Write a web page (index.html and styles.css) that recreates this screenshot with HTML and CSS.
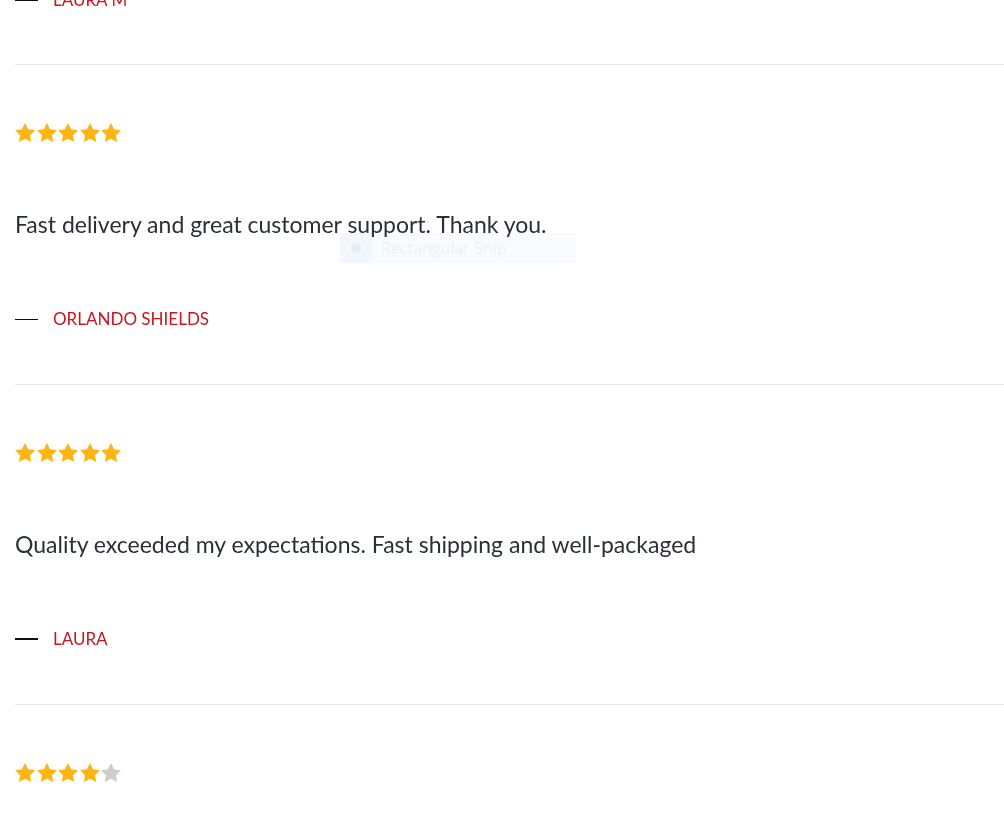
FILE: index.html
```html
<!DOCTYPE html>
<html lang="en">
<head>
<meta charset="utf-8">
<title>Reviews</title>
<link rel="stylesheet" href="styles.css">
</head>
<body>
<main class="reviews">
  <div class="review review--cut">
    <div class="author"><span class="dash dash--thick"></span><span class="name">Laura M</span></div>
  </div>

  <article class="review">
    <div class="stars">
      <svg class="star on" viewBox="2 2 20 19.02"><path d="M12 2l3.09 6.26L22 9.27l-5 4.87 1.18 6.88L12 17.770l-6.18 3.25L7 14.14 2 9.27l6.91-1.01L12 2z"/></svg>
      <svg class="star on" viewBox="2 2 20 19.02"><path d="M12 2l3.09 6.26L22 9.27l-5 4.87 1.18 6.88L12 17.77l-6.18 3.25L7 14.14 2 9.27l6.91-1.01L12 2z"/></svg>
      <svg class="star on" viewBox="2 2 20 19.02"><path d="M12 2l3.09 6.26L22 9.27l-5 4.87 1.18 6.88L12 17.77l-6.18 3.25L7 14.14 2 9.27l6.91-1.01L12 2z"/></svg>
      <svg class="star on" viewBox="2 2 20 19.02"><path d="M12 2l3.09 6.26L22 9.27l-5 4.87 1.18 6.88L12 17.77l-6.18 3.25L7 14.14 2 9.27l6.91-1.01L12 2z"/></svg>
      <svg class="star on" viewBox="2 2 20 19.02"><path d="M12 2l3.09 6.26L22 9.27l-5 4.87 1.18 6.88L12 17.77l-6.18 3.25L7 14.14 2 9.27l6.91-1.01L12 2z"/></svg>
    </div>
    <p class="text">Fast delivery and great customer support. Thank you.</p>
    <div class="author"><span class="dash"></span><span class="name">Orlando Shields</span></div>
  </article>

  <article class="review">
    <div class="stars">
      <svg class="star on" viewBox="2 2 20 19.02"><path d="M12 2l3.09 6.26L22 9.27l-5 4.87 1.18 6.88L12 17.77l-6.18 3.25L7 14.14 2 9.27l6.91-1.01L12 2z"/></svg>
      <svg class="star on" viewBox="2 2 20 19.02"><path d="M12 2l3.09 6.26L22 9.27l-5 4.87 1.18 6.88L12 17.77l-6.18 3.25L7 14.14 2 9.27l6.91-1.01L12 2z"/></svg>
      <svg class="star on" viewBox="2 2 20 19.02"><path d="M12 2l3.09 6.26L22 9.27l-5 4.87 1.18 6.88L12 17.77l-6.18 3.25L7 14.14 2 9.27l6.91-1.01L12 2z"/></svg>
      <svg class="star on" viewBox="2 2 20 19.02"><path d="M12 2l3.09 6.26L22 9.27l-5 4.87 1.18 6.88L12 17.77l-6.18 3.25L7 14.14 2 9.27l6.91-1.01L12 2z"/></svg>
      <svg class="star on" viewBox="2 2 20 19.02"><path d="M12 2l3.09 6.26L22 9.27l-5 4.87 1.18 6.88L12 17.77l-6.18 3.25L7 14.14 2 9.27l6.91-1.01L12 2z"/></svg>
    </div>
    <p class="text">Quality exceeded my expectations. Fast shipping and well-packaged</p>
    <div class="author"><span class="dash dash--thick"></span><span class="name">Laura</span></div>
  </article>

  <article class="review review--last">
    <div class="stars">
      <svg class="star on" viewBox="2 2 20 19.02"><path d="M12 2l3.09 6.26L22 9.27l-5 4.87 1.18 6.88L12 17.77l-6.18 3.25L7 14.14 2 9.27l6.91-1.01L12 2z"/></svg>
      <svg class="star on" viewBox="2 2 20 19.02"><path d="M12 2l3.09 6.26L22 9.27l-5 4.87 1.18 6.88L12 17.77l-6.18 3.25L7 14.14 2 9.27l6.91-1.01L12 2z"/></svg>
      <svg class="star on" viewBox="2 2 20 19.02"><path d="M12 2l3.09 6.26L22 9.27l-5 4.87 1.18 6.88L12 17.77l-6.18 3.25L7 14.14 2 9.27l6.91-1.01L12 2z"/></svg>
      <svg class="star on" viewBox="2 2 20 19.02"><path d="M12 2l3.09 6.26L22 9.27l-5 4.87 1.18 6.88L12 17.77l-6.18 3.25L7 14.14 2 9.27l6.91-1.01L12 2z"/></svg>
      <svg class="star off" viewBox="2 2 20 19.02"><path d="M12 2l3.09 6.26L22 9.27l-5 4.87 1.18 6.88L12 17.77l-6.18 3.25L7 14.14 2 9.27l6.91-1.01L12 2z"/></svg>
    </div>
  </article>
</main>

<div class="snip">
  <span class="snip-icon"><span class="snip-dot"></span></span>
  <span class="snip-label">Rectangular Snip</span>
</div>
</body>
</html>
```

FILE: styles.css
```css
html, body {
  margin: 0;
  padding: 0;
  background: #ffffff;
  overflow: hidden;
  height: 832px;
}

body {
  font-family: Lato, "Noto Sans", sans-serif;
  color: #2b3038;
}

.reviews {
  margin-left: 15px;
  display: flex;
  flex-direction: column;
}

.review {
  display: flex;
  flex-direction: column;
  border-top: 1px solid #ebebeb;
  padding: 57px 0 53px;
}

.review--cut {
  border-top: none;
  padding-top: 0;
  padding-bottom: 52px;
  margin-top: -12px;
}

.review--last {
  padding-bottom: 0;
}

.stars {
  display: flex;
  gap: 1.5px;
  height: 20px;
  align-items: center;
}

.star {
  width: 20px;
  height: 19px;
  display: block;
}

.star.on { fill: #fdb515; }
.star.off { fill: #cdcdcd; }

.text {
  margin: 66px 0 0;
  font-size: 23px;
  line-height: 32px;
  color: #2b3038;
}

.author {
  margin-top: 67px;
  display: flex;
  align-items: center;
  height: 24px;
}

.review--cut .author {
  margin-top: 0;
}

.dash {
  width: 23px;
  height: 1px;
  background: #111111;
  margin-right: 15px;
}

.dash--thick {
  height: 2px;
}

.name {
  font-size: 17px;
  line-height: 24px;
  text-transform: uppercase;
  color: #c8161d;
}

.snip {
  position: absolute;
  left: 340px;
  top: 233px;
  width: 236px;
  height: 30px;
  display: flex;
  align-items: center;
  background: #f8fbff;
  mix-blend-mode: multiply;
  font-family: "Open Sans", sans-serif;
}

.snip-icon {
  width: 32px;
  height: 30px;
  background: #f2f7fd;
  display: flex;
  align-items: center;
  justify-content: center;
}

.snip-dot {
  width: 10px;
  height: 10px;
  border-radius: 50%;
  background: #e9ecf1;
}

.snip-label {
  margin-left: 9px;
  font-size: 16px;
  color: #eceff4;
}
```
